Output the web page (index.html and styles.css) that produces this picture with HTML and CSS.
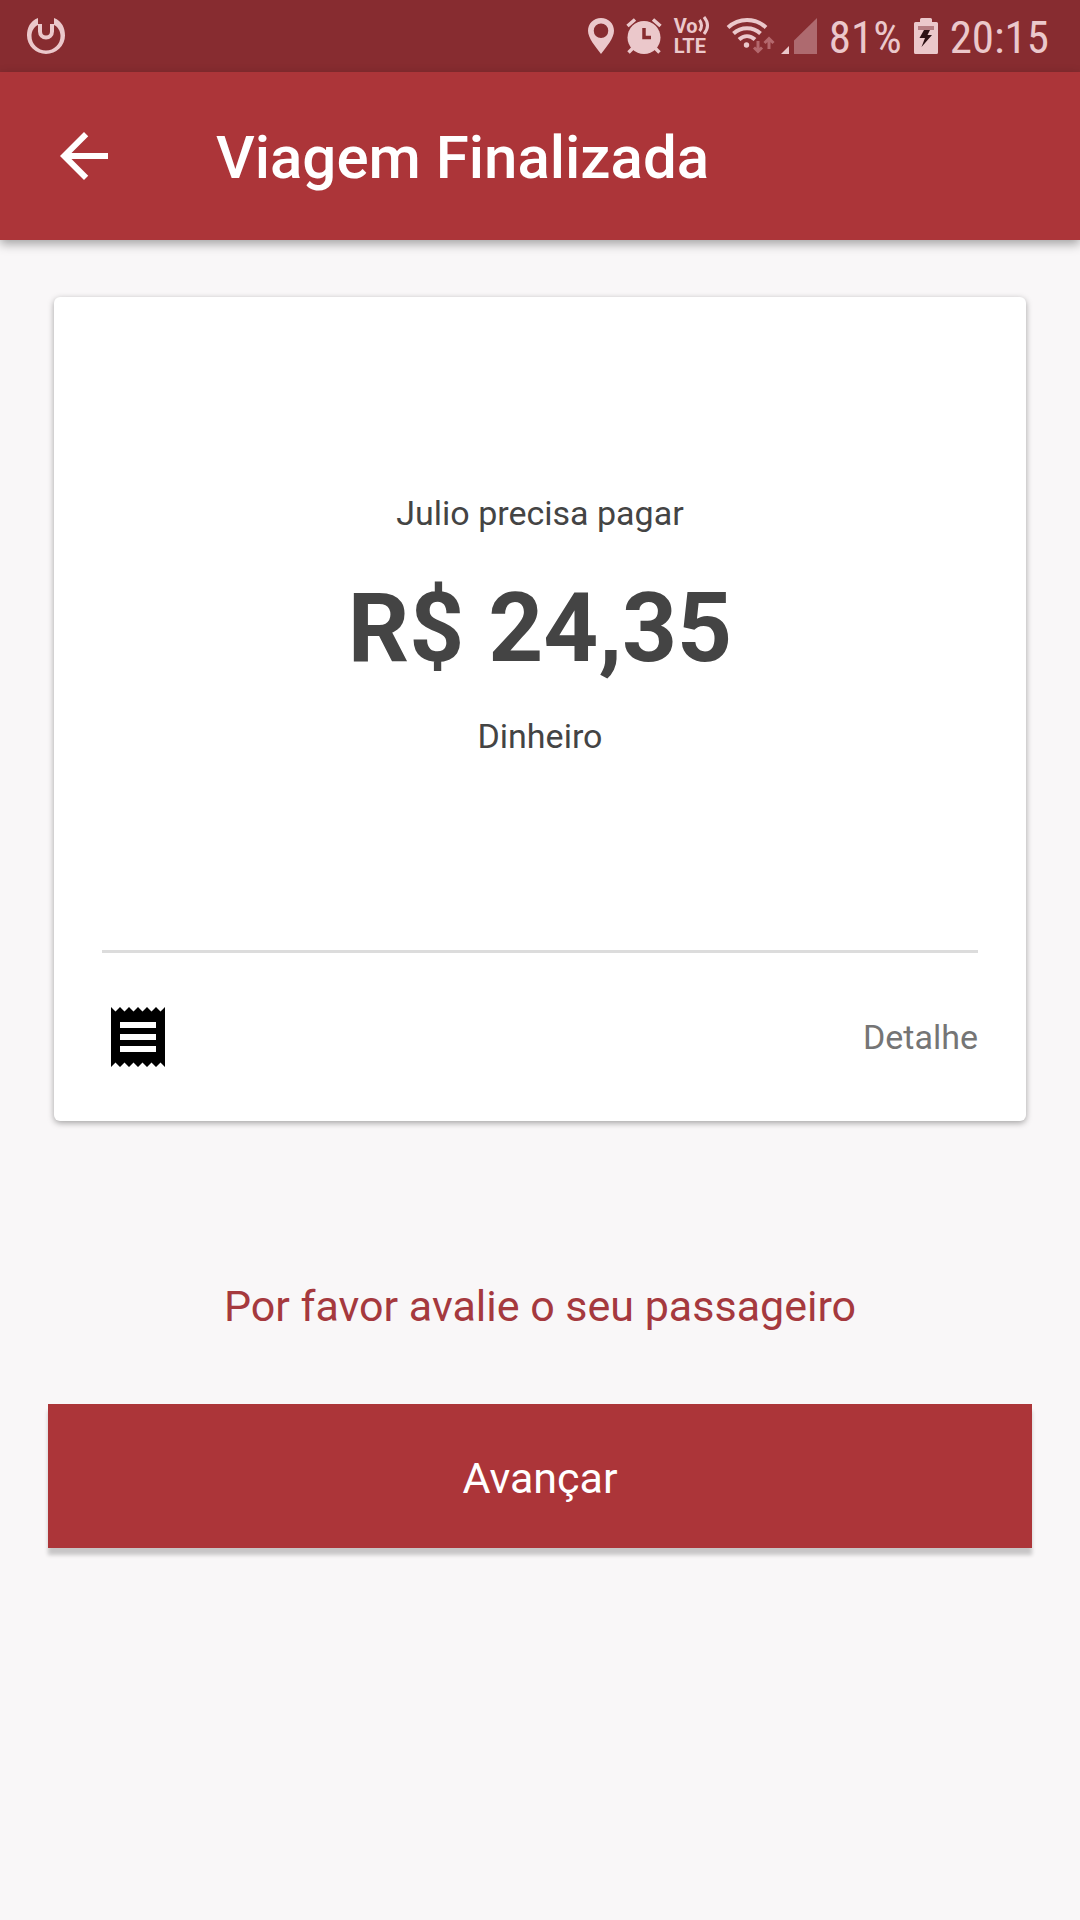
FILE: index.html
```
<!DOCTYPE html>
<html lang="pt-BR">
<head>
  <meta charset="utf-8">
  <meta name="viewport" content="width=device-width, initial-scale=1">
  <title>Viagem Finalizada</title>
  <link rel="stylesheet" href="styles.css">
</head>
<body>
  <div class="status-bar">
    <svg class="status-logo" width="40" height="40" viewBox="0 0 40 40" aria-hidden="true">
      <path fill="currentColor" fill-rule="evenodd" d="M12 2C4 5 1 12 1 19.500A19 18.500 0 0 0 39 19.500C39 12 36 5 28 2V9C32 11 34.500 15 34.500 20A14.500 14.500 0 0 1 5.500 20C5.500 15 8 11 12 9Z"/>
      <path fill="none" stroke="currentColor" stroke-width="4" d="M14 8V15.500A6 6 0 0 0 26 15.500V8"/>
    </svg>
    <div class="status-icons">
      <svg width="26" height="36" viewBox="0 0 26 36" aria-hidden="true">
        <path fill="currentColor" fill-rule="evenodd" d="M13 0C5.500 0 0 5.700 0 12.700C0 20 7 28 13 36C19 28 26 20 26 12.700C26 5.700 20.500 0 13 0ZM13 5.500A7.200 7.200 0 1 1 13 20A7.200 7.200 0 1 1 13 5.500Z"/>
      </svg>
      <svg class="alarm" width="36" height="36" viewBox="0 0 36 36" aria-hidden="true">
        <circle cx="18" cy="19.500" r="16.500" fill="currentColor"/>
        <path d="M1.500 8L9 1.500M34.500 8L27 1.500M7 30L2.500 34.500M29 30L33.500 34.500" fill="none" stroke="currentColor" stroke-width="3.500"/>
        <path d="M18 10V19.500H25" fill="none" stroke="#872c30" stroke-width="3.500"/>
      </svg>
      <div class="volte">
        <span class="volte-row">Vo<svg width="12" height="20" viewBox="0 0 12 20" aria-hidden="true"><path d="M1.500 4Q5.500 9.500 1.500 15M6 1Q13 9.500 6 18" fill="none" stroke="currentColor" stroke-width="3"/></svg></span>
        <span class="volte-row">LTE</span>
      </div>
      <svg class="wifi" width="49" height="36" viewBox="0 0 49 36" aria-hidden="true">
        <g fill="none" stroke="currentColor" stroke-width="4">
          <path d="M2 9.500C13-.500 29-.500 40 9.500"/>
          <path d="M7.500 15.500C15 8.500 27 8.500 34.500 15.500"/>
          <path d="M13 21.500C18 17 24 17 29 21.500"/>
        </g>
        <circle cx="20.500" cy="27" r="2.700" fill="currentColor"/>
        <path d="M32 23V33M28 29.500L32 33.500L36 29.500M43 31V21M38.500 25L43 20.500L47.500 25" fill="none" stroke="#b4686d" stroke-width="3"/>
      </svg>
      <svg class="signal" width="36" height="36" viewBox="0 0 36 36" aria-hidden="true">
        <path fill="currentColor" d="M8 28V36H0Z"/>
        <path fill="#ae6a6f" d="M36 0V36H13V22.500Z"/>
      </svg>
      <span class="status-text battery-level">81%</span>
      <svg width="24" height="36" viewBox="0 0 24 36" aria-hidden="true">
        <path fill="currentColor" d="M6 4V1.500Q6 0 7.500 0H16.500Q18 0 18 1.500V4H22.500Q24 4 24 5.500V34.500Q24 36 22.500 36H1.500Q0 36 0 34.500V5.500Q0 4 1.500 4Z"/>
        <path fill="#b57c81" d="M4 8H20V12H4Z"/>
        <path fill="#2b1014" d="M10 12H16L13.500 17H18L7.500 29L11 20H5.500Z"/>
      </svg>
      <span class="status-text clock">20:15</span>
    </div>
  </div>

  <header class="app-bar">
    <button class="back" type="button" aria-label="Voltar">
      <svg width="72" height="72" viewBox="0 0 24 24" aria-hidden="true"><path fill="currentColor" d="M20 11H7.830l5.590-5.590L12 4l-8 8 8 8 1.410-1.410L7.830 13H20v-2z"/></svg>
    </button>
    <h1 class="title">Viagem Finalizada</h1>
  </header>

  <main class="content">
    <section class="card">
      <div class="payment">
        <p class="label">Julio precisa pagar</p>
        <p class="amount">R$ 24,35</p>
        <p class="label">Dinheiro</p>
      </div>
      <div class="card-footer">
        <svg width="72" height="72" viewBox="0 0 24 24" aria-hidden="true"><path d="M18 17H6v-2h12v2zm0-4H6v-2h12v2zm0-4H6V7h12v2zM3 22l1.500-1.500L6 22l1.500-1.500L9 22l1.500-1.500L12 22l1.500-1.500L15 22l1.500-1.500L18 22l1.500-1.500L21 22V2l-1.500 1.500L18 2l-1.500 1.500L15 2l-1.500 1.500L12 2l-1.500 1.500L9 2 7.500 3.500 6 2 4.500 3.500 3 2v20z"/></svg>
        <a class="detail" href="#detalhe">Detalhe</a>
      </div>
    </section>
    <p class="prompt">Por favor avalie o seu passageiro</p>
    <button class="next" type="button">Avançar</button>
  </main>
</body>
</html>
```
FILE: styles.css
```
* {
  box-sizing: border-box;
}

body {
  margin: 0;
  min-height: 100vh;
  background: #f9f7f8;
  color: #444;
  font-family: Roboto, "Liberation Sans", sans-serif;
}

svg {
  display: block;
  flex: none;
}

h1,
p {
  margin: 0;
}

button {
  border: 0;
  padding: 0;
  font: inherit;
  cursor: pointer;
}

.status-bar {
  display: flex;
  align-items: center;
  justify-content: space-between;
  height: 72px;
  padding: 0 31px 0 26px;
  background: #872c30;
  color: #ebc8cb;
}

.status-icons {
  display: flex;
  align-items: center;
  gap: 12px;
}

.volte {
  display: flex;
  flex-direction: column;
  width: 36px;
  font-size: 20px;
  font-weight: 700;
  line-height: 20px;
}

.volte-row {
  display: flex;
  align-items: center;
  height: 20px;
}

.wifi {
  margin-left: 4px;
}

.signal {
  margin-left: -6px;
}

.status-text {
  padding-top: 3px;
  font-family: "Roboto Condensed", Roboto, sans-serif;
  font-size: 45px;
  line-height: 48px;
}

.app-bar {
  display: flex;
  align-items: center;
  gap: 96px;
  padding: 48px;
  background: #ac3539;
  color: #fff;
  box-shadow: 0 4px 10px rgba(0, 0, 0, 0.35);
}

.back {
  background: none;
  color: inherit;
}

.title {
  padding-top: 4px;
  font-size: 60px;
  font-weight: 500;
  line-height: 68px;
}

.content {
  padding: 57px 48px 48px;
}

.card {
  margin: 0 6px;
  padding: 0 48px;
  border-radius: 6px;
  background: #fff;
  box-shadow: 0 2px 6px rgba(0, 0, 0, 0.35);
}

.payment {
  padding: 196px 0 194px;
  border-bottom: 3px solid #dcdcdc;
  text-align: center;
}

.label {
  font-size: 34px;
  line-height: 40px;
}

.amount {
  margin: 35px 0 28px;
  font-size: 96px;
  font-weight: 700;
  line-height: 120px;
}

.card-footer {
  display: flex;
  align-items: center;
  justify-content: space-between;
  padding: 48px 0;
}

.detail {
  color: #757575;
  font-size: 34px;
  line-height: 40px;
  text-decoration: none;
}

.prompt {
  padding: 161px 0 74px;
  color: #a5393e;
  font-size: 43px;
  line-height: 48px;
  text-align: center;
}

.next {
  display: block;
  width: 100%;
  padding: 50px 0 46px;
  background: #ac3539;
  color: #fff;
  font-size: 43px;
  line-height: 48px;
  box-shadow: 0 7px 4px rgba(0, 0, 0, 0.2);
}
```
